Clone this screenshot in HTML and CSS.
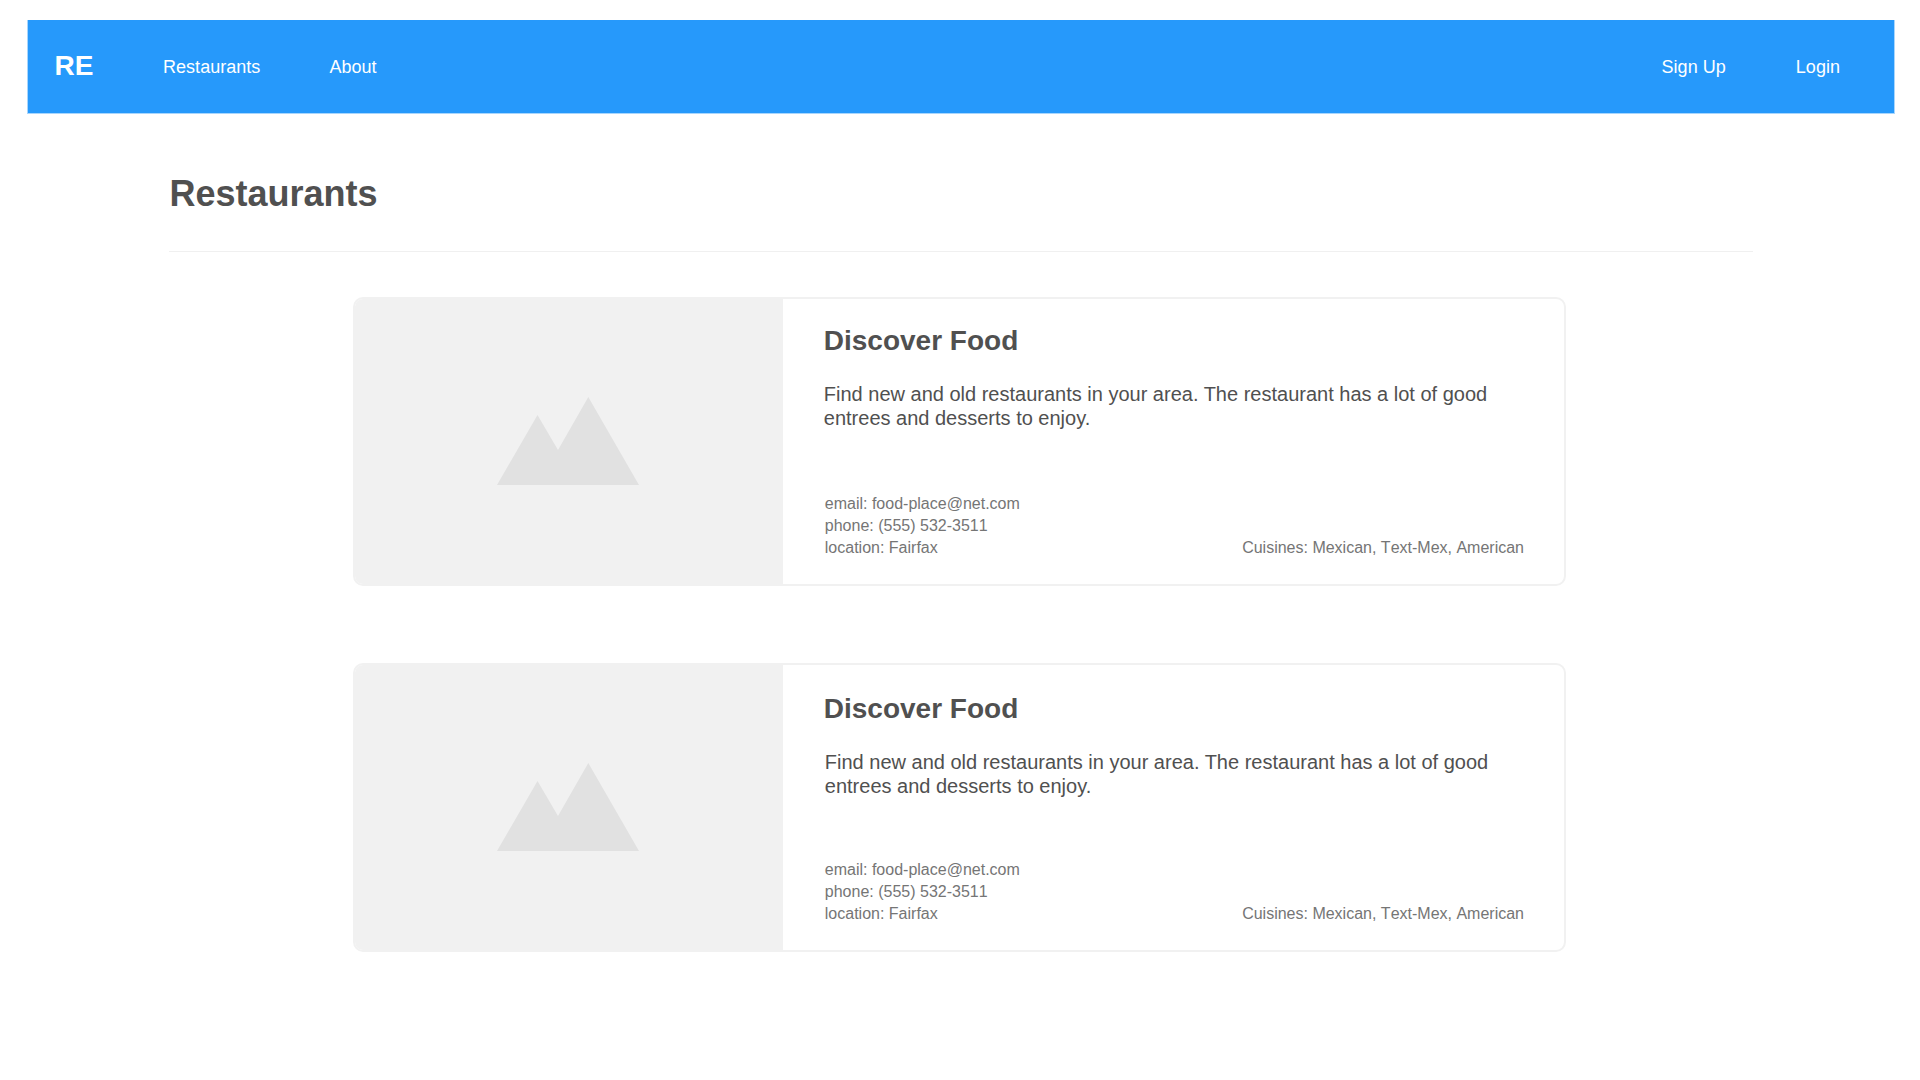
FILE: index.html
```html
<!DOCTYPE html>
<html lang="en">
<head>
<meta charset="utf-8">
<title>Restaurants</title>
<link rel="stylesheet" href="styles.css">
</head>
<body>
<header class="navbar">
  <a class="brand">RE</a>
  <nav class="links"><a>Restaurants</a><a>About</a></nav>
  <nav class="links account"><a>Sign Up</a><a>Login</a></nav>
</header>
<main class="page">
  <h1 class="page-title">Restaurants</h1>
  <section class="list">
    <article class="card">
      <div class="thumb">
        <svg class="mountains" viewBox="0 0 142 88"><path d="M0 88 40.5 18 61 53 91.3 0 142 88Z"/></svg>
      </div>
      <div class="body">
        <h2 class="name">Discover Food</h2>
        <p class="description">Find new and old restaurants in your area. The restaurant has a lot of good entrees and desserts to enjoy.</p>
        <div class="meta">
          <ul class="contact"><li>email: food-place@net.com</li><li>phone: (555) 532-3511</li><li>location: Fairfax</li></ul>
          <p class="cuisines">Cuisines: Mexican, Text-Mex, American</p>
        </div>
      </div>
    </article>
    <article class="card card-lower">
      <div class="thumb">
        <svg class="mountains" viewBox="0 0 142 88"><path d="M0 88 40.5 18 61 53 91.3 0 142 88Z"/></svg>
      </div>
      <div class="body">
        <h2 class="name">Discover Food</h2>
        <p class="description">Find new and old restaurants in your area. The restaurant has a lot of good entrees and desserts to enjoy.</p>
        <div class="meta">
          <ul class="contact"><li>email: food-place@net.com</li><li>phone: (555) 532-3511</li><li>location: Fairfax</li></ul>
          <p class="cuisines">Cuisines: Mexican, Text-Mex, American</p>
        </div>
      </div>
    </article>
  </section>
</main>
</body>
</html>
```
FILE: styles.css
```css
* { box-sizing: border-box; margin: 0; padding: 0; }

body {
  background: #fff;
  color: #505050;
  font-family: "Liberation Sans", Arial, Helvetica, sans-serif;
}

.navbar {
  display: flex;
  align-items: flex-start;
  height: 94px;
  margin: 20px 25px 0 27px;
  padding: 0 54px 0 26.5px;
  background: #2699fb;
  background-clip: padding-box;
  border: solid #a8d6fd;
  border-width: 0 1px 1px;
  color: #fff;
}

.brand {
  width: 108.5px;
  padding-top: 30px;
  font-size: 28px;
  font-weight: 700;
  line-height: 31px;
}

.links {
  display: flex;
  gap: 69px;
  padding-top: 37px;
  font-size: 18px;
  line-height: 20px;
  letter-spacing: 0.03px;
}

.account { margin-left: auto; gap: 70px; }

.page { margin: 0 167px 0 169px; }

.page-title {
  height: 138px;
  padding: 59px 0 0 0.5px;
  border-bottom: 1px solid #f0f0f0;
  font-size: 36px;
  line-height: 41px;
}

.list {
  display: flex;
  flex-direction: column;
  gap: 77px;
  width: 1213px;
  margin: 45px 0 0 184px;
}

.card {
  display: flex;
  height: 289px;
  border: 2px solid #f1f1f1;
  border-radius: 10px;
  overflow: hidden;
}

.thumb {
  display: flex;
  flex: 0 0 428px;
  align-items: center;
  justify-content: center;
  padding: 0 2px 1px 0;
  background: #f1f1f1;
}

.mountains { width: 142px; height: 88px; fill: #e1e1e1; }

.body {
  display: flex;
  flex: 1;
  flex-direction: column;
  padding: 26px 40px 25px 41.8px;
}

.name { font-size: 28px; line-height: 31px; margin-left: -1px; }

.description {
  width: 690px;
  margin-top: 26px;
  margin-left: -1px;
  font-size: 20px;
  line-height: 24px;
}

.card-lower .body { padding-top: 28px; }
.card-lower .description { margin-left: 0; }

.meta {
  display: flex;
  align-items: flex-end;
  justify-content: space-between;
  margin-top: auto;
  color: #757575;
  font-size: 16px;
  font-kerning: none;
  line-height: 22px;
}

.contact { list-style: none; }
```
